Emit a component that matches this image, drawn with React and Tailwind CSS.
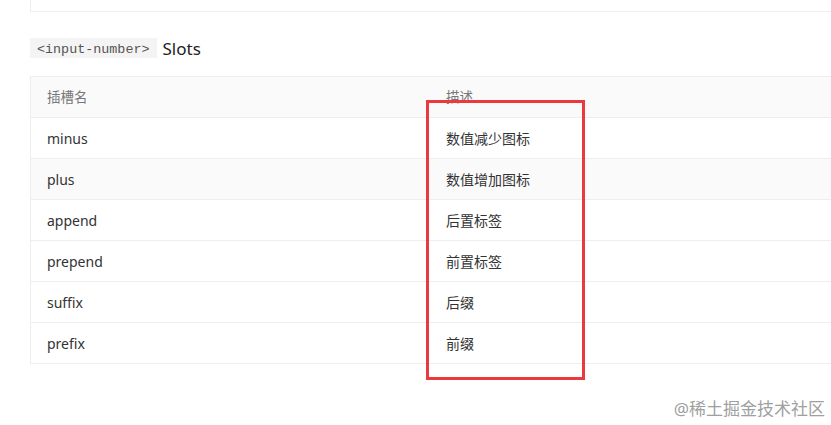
import React from 'react';

const slots = [
    { name: 'minus', desc: '数值减少图标' },
    { name: 'plus', desc: '数值增加图标', hover: true },
    { name: 'append', desc: '后置标签' },
    { name: 'prepend', desc: '前置标签' },
    { name: 'suffix', desc: '后缀' },
    { name: 'prefix', desc: '前缀' },
];

const App = () => {
    return (
        <div className="relative w-[831px] h-[425px] bg-white overflow-hidden font-['Noto_Sans','Noto_Sans_CJK_SC',sans-serif]">
            {/* previous block edge */}
            <div className="ml-[30px] h-[12px] border-l border-b border-[#eeeeee]" />

            {/* Heading */}
            <div className="ml-[30px] mt-[26px] flex items-center gap-[6px] h-[20px]">
                <code className="h-[20px] px-[7px] pt-[3px] flex items-center bg-[#f4f4f4] text-[#555] text-[13.4px] leading-none font-['Liberation_Mono',monospace]">
                    &lt;input-number&gt;
                </code>
                <span className="text-[17px] text-[#222] leading-none">Slots</span>
            </div>

            {/* Table */}
            <div className="ml-[30px] mt-[18px] w-[830px] border-t border-l border-[#eeeeee] text-[14px]">
                <div className="flex h-[41px] items-center bg-[#fafafa] border-b border-[#eeeeee] text-[#777] text-[13.5px]">
                    <div className="w-[399px] pl-[16px]">插槽名</div>
                    <div className="pl-[16px]">描述</div>
                </div>
                {slots.map((s) => (
                    <div
                        key={s.name}
                        className={`flex h-[41px] items-center border-b border-[#eeeeee] text-[#333] ${s.hover ? 'bg-[#fafafa]' : 'bg-white'}`}
                    >
                        <div className="w-[399px] pl-[16px]">{s.name}</div>
                        <div className="pl-[16px] text-[14px]">{s.desc}</div>
                    </div>
                ))}
            </div>

            {/* Annotation box */}
            <div className="absolute left-[426px] top-[100px] w-[159px] h-[280px] border-[3px] border-[#ea3a3f]" />

            {/* Watermark */}
            <div className="absolute right-[6px] top-[396px] text-[17px] text-[#a0a0a0] font-['Noto_Sans','Noto_Sans_CJK_SC',sans-serif]">
                @稀土掘金技术社区
            </div>
        </div>
    );
};

export default App;
